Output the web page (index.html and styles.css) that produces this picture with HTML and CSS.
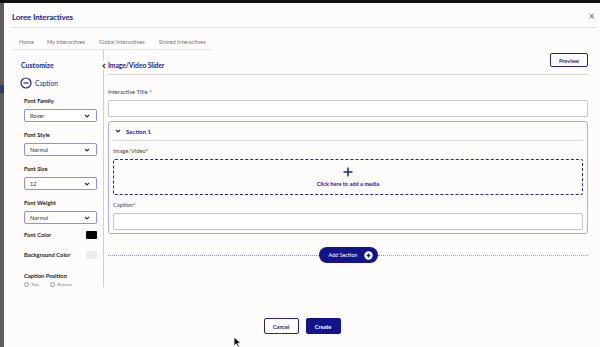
FILE: index.html
```html
<!DOCTYPE html>
<html lang="en">
<head>
  <meta charset="UTF-8">
  <meta name="viewport" content="width=device-width, initial-scale=1.0">
  <title>Loree Interactives</title>
  <link rel="stylesheet" href="styles.css">
</head>
<body>
  <div class="backdrop">
    <div class="backdrop-block"></div>
  </div>
  <div class="modal">
    <header class="modal-header">
      <h1>Loree Interactives</h1>
      <span class="close">&times;</span>
    </header>

    <nav class="tabs">
      <span class="tab">Home</span>
      <span class="tab">My Interactives</span>
      <span class="tab">Global Interactives</span>
      <span class="tab">Shared Interactives</span>
    </nav>

    <div class="content">
      <aside class="sidebar">
        <span class="collapse-btn">
          <svg width="6" height="6" viewBox="0 0 6 6"><path d="M4 1 L2 3 L4 5" fill="none" stroke="#333" stroke-width="1.1"/></svg>
        </span>
        <h2 class="sidebar-title">Customize</h2>
        <div class="group-toggle">
          <svg width="12" height="12" viewBox="0 0 12 12"><circle cx="6" cy="6" r="5" fill="none" stroke="#23238e" stroke-width="1.2"/><path d="M3.5 6 H8.5" stroke="#23238e" stroke-width="1.2"/></svg>
          <span>Caption</span>
        </div>

        <div class="field">
          <label>Font Family</label>
          <div class="select"><span>Rover</span><svg width="6" height="4" viewBox="0 0 6 4"><path d="M1 1 L3 3 L5 1" fill="none" stroke="#333" stroke-width="1.1"/></svg></div>
        </div>
        <div class="field">
          <label>Font Style</label>
          <div class="select"><span>Normal</span><svg width="6" height="4" viewBox="0 0 6 4"><path d="M1 1 L3 3 L5 1" fill="none" stroke="#333" stroke-width="1.1"/></svg></div>
        </div>
        <div class="field">
          <label>Font Size</label>
          <div class="select"><span>12</span><svg width="6" height="4" viewBox="0 0 6 4"><path d="M1 1 L3 3 L5 1" fill="none" stroke="#333" stroke-width="1.1"/></svg></div>
        </div>
        <div class="field">
          <label>Font Weight</label>
          <div class="select"><span>Normal</span><svg width="6" height="4" viewBox="0 0 6 4"><path d="M1 1 L3 3 L5 1" fill="none" stroke="#333" stroke-width="1.1"/></svg></div>
        </div>
        <div class="color-row">
          <label>Font Color</label>
          <span class="swatch swatch-black"></span>
        </div>
        <div class="color-row">
          <label>Background Color</label>
          <span class="swatch swatch-light"></span>
        </div>
        <div class="field">
          <label>Caption Position</label>
          <div class="radios">
            <span class="radio"><i></i>Top</span>
            <span class="radio"><i></i>Bottom</span>
          </div>
        </div>
      </aside>

      <main class="editor">
        <div class="editor-header">
          <h2 class="editor-title">Image/Video Slider</h2>
          <button class="btn-outline preview-btn">Preview</button>
        </div>

        <label class="input-label first-label">Interactive Title *</label>
        <div class="input"></div>

        <section class="card">
          <div class="card-header">
            <svg width="6" height="4" viewBox="0 0 6 4"><path d="M1 1 L3 3 L5 1" fill="none" stroke="#23238e" stroke-width="1.2"/></svg>
            <span>Section 1</span>
          </div>
          <label class="input-label">Image/Video*</label>
          <div class="dropzone">
            <svg width="10" height="10" viewBox="0 0 10 10"><path d="M5 0.5 V9.5 M0.5 5 H9.5" stroke="#23238e" stroke-width="1.5"/></svg>
            <span>Click here to add a media</span>
          </div>
          <label class="input-label">Caption*</label>
          <div class="input"></div>
        </section>

        <div class="add-row">
          <button class="add-section">Add Section
            <svg width="9" height="9" viewBox="0 0 9 9"><circle cx="4.5" cy="4.5" r="4.2" fill="#fff"/><path d="M4.5 2.6 V6.4 M2.6 4.5 H6.4" stroke="#14148a" stroke-width="1.3"/></svg>
          </button>
        </div>
      </main>
    </div>

    <footer class="actions">
      <button class="btn-outline">Cancel</button>
      <button class="btn-solid">Create</button>
    </footer>
  </div>

  <svg class="cursor" width="9" height="12" viewBox="0 0 9 12"><path d="M1 1 L1 10 L3.3 7.8 L5 11 L6.4 10.3 L4.8 7.2 L8 7.2 Z" fill="#111" stroke="#fff" stroke-width="0.8"/></svg>
</body>
</html>
```

FILE: styles.css
```css
* {
  box-sizing: border-box;
}

body {
  margin: 0;
  height: 347px;
  overflow: hidden;
  display: flex;
  padding-top: 3px;
  background-color: #111;
  font-family: Lato, "Open Sans", sans-serif;
  color: #222;
}

button {
  font-family: inherit;
  cursor: pointer;
}

.backdrop {
  width: 4px;
  background-color: #5c5c5c;
  padding-top: 82px;
}

.backdrop-block {
  height: 8px;
  background-color: #2d3a6e;
}

.modal {
  flex: 1;
  display: flex;
  flex-direction: column;
  background-color: #fdfcfb;
  padding: 0 8px;
}

/* header */
.modal-header {
  height: 25px;
  margin-right: -4px;
  padding-top: 4px;
  display: flex;
  justify-content: space-between;
  align-items: center;
  border-bottom: 1px solid #e1e1e1;
}

.modal-header h1 {
  margin: 0;
  font-size: 8px;
  font-weight: 700;
  color: #23238e;
  letter-spacing: -0.15px;
}

.close {
  font-size: 11px;
  color: #666;
  margin-top: -3px;
  margin-right: 1px;
}

/* tabs */
.tabs {
  width: 200px;
  height: 22px;
  display: flex;
  align-items: flex-end;
  padding-bottom: 4px;
  border-bottom: 1px solid #e6e6e6;
  white-space: nowrap;
}

.tab {
  font-size: 5.6px;
  color: #777;
  padding: 0 7px;
}

.tab:first-child {
  margin-right: -1px;
}

/* content */
.content {
  display: flex;
  height: 237px;
}

.sidebar {
  position: relative;
  width: 92px;
  height: 237px;
  border-right: 1px solid #cfcfcf;
  padding-left: 9px;
}

.collapse-btn {
  position: absolute;
  right: -5px;
  top: 11px;
  width: 9px;
  height: 9px;
  border-radius: 50%;
  background-color: #fdfcfb;
  display: flex;
  justify-content: center;
  align-items: center;
}

.sidebar-title {
  margin: 11px 0 0;
  font-size: 7px;
  font-weight: 700;
  color: #23238e;
  line-height: 9px;
}

.group-toggle {
  display: flex;
  align-items: center;
  gap: 3px;
  margin-top: 7px;
  margin-left: -1px;
  font-size: 6.6px;
  color: #23238e;
}

.field {
  margin-left: 3px;
  margin-top: 9px;
}

.group-toggle + .field {
  margin-top: 8px;
}

.field label,
.color-row label {
  display: block;
  font-size: 5.8px;
  font-weight: 700;
  color: #222;
  line-height: 8px;
}

.select {
  width: 73px;
  height: 13px;
  margin-top: 4px;
  border: 1px solid #8f8fe6;
  border-radius: 2px;
  padding: 0 6px 0 5px;
  display: flex;
  justify-content: space-between;
  align-items: center;
  font-size: 5.6px;
  color: #333;
  background-color: #fff;
}

.color-row {
  margin-left: 3px;
  margin-top: 7px;
  width: 73px;
  display: flex;
  justify-content: space-between;
  align-items: center;
}

.color-row + .color-row {
  margin-top: 12px;
}

.swatch {
  width: 11px;
  height: 8px;
  border-radius: 1px;
}

.swatch-black {
  background-color: #050505;
}

.swatch-light {
  background-color: #ececec;
}

.color-row + .field {
  margin-top: 13px;
}

.radios {
  display: flex;
  gap: 12px;
  margin-top: 2px;
}

.radio {
  display: flex;
  align-items: center;
  gap: 2px;
  font-size: 4.5px;
  line-height: 5px;
  color: #888;
}

.radio i {
  display: block;
  width: 5px;
  height: 5px;
  border: 1px solid #8f8fe6;
  border-radius: 50%;
}

/* editor */
.editor {
  flex: 1;
  margin-left: 4px;
  margin-right: 4px;
}

.editor-header {
  height: 25px;
  display: flex;
  justify-content: space-between;
  align-items: flex-start;
  border-bottom: 1px solid #d4d4d4;
}

.editor-title {
  margin: 10px 0 0;
  font-size: 6.8px;
  font-weight: 700;
  line-height: 10px;
  color: #23238e;
  letter-spacing: -0.1px;
}

.btn-outline {
  height: 16px;
  padding: 0 8px;
  border: 1px solid #23238e;
  border-radius: 2px;
  background-color: #fff;
  font-size: 5.6px;
  font-weight: 700;
  color: #23238e;
}

.preview-btn {
  margin-top: 3px;
  height: 14px;
  width: 38px;
  padding: 0;
}

.input-label {
  display: block;
  font-size: 5.8px;
  color: #444;
  line-height: 8px;
  margin-top: 6px;
}

.first-label {
  margin-top: 13px;
}

.input {
  height: 17px;
  margin-top: 4px;
  border: 1px solid #c4c4c4;
  border-radius: 2px;
  background-color: #fff;
}

.card {
  margin-top: 4px;
  height: 113px;
  border: 1px solid #a9a9ec;
  border-radius: 3px;
  padding: 0 4px;
}

.card-header {
  height: 19px;
  display: flex;
  align-items: center;
  gap: 5px;
  padding-left: 2px;
  border-bottom: 1px solid #d8d8d8;
  font-size: 6px;
  font-weight: 700;
  color: #23238e;
}

.dropzone {
  height: 36px;
  margin-top: 4px;
  border: 1.5px dashed #23238e;
  border-radius: 2px;
  display: flex;
  flex-direction: column;
  justify-content: center;
  align-items: center;
  gap: 3px;
  font-size: 5.6px;
  font-weight: 700;
  color: #23238e;
}

.add-row {
  margin-top: 13px;
  display: flex;
  align-items: center;
}

.add-row::before,
.add-row::after {
  content: "";
  flex: 1;
  border-top: 1px dotted #8d8de8;
}

.add-section {
  height: 16px;
  width: 59px;
  padding: 0 5px 0 10px;
  border: none;
  border-radius: 8px;
  background-color: #14148a;
  color: #fff;
  font-size: 5.4px;
  display: flex;
  align-items: center;
  justify-content: space-between;
}

/* footer */
.actions {
  margin-top: auto;
  padding-bottom: 13px;
  display: flex;
  justify-content: center;
  gap: 7px;
}

.actions button {
  width: 35px;
  height: 16px;
  padding: 0;
}

.btn-solid {
  border: 1px solid #14148a;
  border-radius: 2px;
  background-color: #14148a;
  color: #fff;
  font-size: 5.6px;
  font-weight: 700;
}

.cursor {
  position: absolute;
  left: 233px;
  top: 336px;
}
```
